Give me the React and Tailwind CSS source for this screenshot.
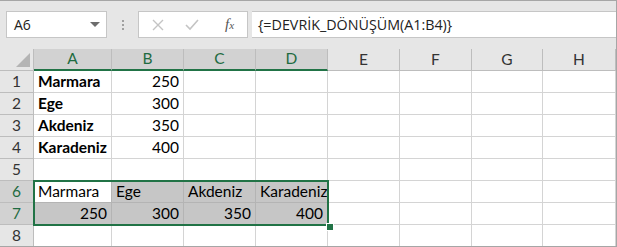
import React from 'react';

const cols = ['A', 'B', 'C', 'D', 'E', 'F', 'G', 'H'];
const widths = ['w-[78px]', 'w-[72px]', 'w-[72px]', 'w-[72px]', 'w-[72px]', 'w-[72px]', 'w-[71px]', 'flex-1'];

const rows = [
  { n: 1, cells: [{ t: 'Marmara', b: true }, { t: '250', r: true }] },
  { n: 2, cells: [{ t: 'Ege', b: true }, { t: '300', r: true }] },
  { n: 3, cells: [{ t: 'Akdeniz', b: true }, { t: '350', r: true }] },
  { n: 4, cells: [{ t: 'Karadeniz', b: true }, { t: '400', r: true }] },
  { n: 5, cells: [] },
  { n: 6, sel: true, cells: [{ t: 'Marmara' }, { t: 'Ege' }, { t: 'Akdeniz' }, { t: 'Karadeniz' }] },
  { n: 7, sel: true, cells: [{ t: '250', r: true }, { t: '300', r: true }, { t: '350', r: true }, { t: '400', r: true }] },
  { n: 8, cells: [] },
];

function Cell({ width, cell, shaded, inSel }) {
  return (
    <div
      className={`${width} h-full shrink-0 border-r border-b flex items-center px-[4px] text-[15.5px] text-black ${
        inSel ? 'border-[#b4b4b4]' : 'border-[#d4d4d4]'
      } ${cell && cell.r ? 'justify-end' : 'justify-start'} ${cell && cell.b ? 'font-bold' : ''} ${
        shaded ? 'bg-[#c6c6c6]' : 'bg-white'
      }`}
    >
      {cell ? cell.t : ''}
    </div>
  );
}

export default function App() {
  return (
    <div className="w-[617px] h-[247px] bg-white border-t border-r border-b border-[#a6a6a6] overflow-hidden font-['Lato',sans-serif] flex flex-col">
      {/* formula bar */}
      <div className="h-[48px] bg-[#e6e6e6] flex items-start pt-[10px] pl-[6px] shrink-0">
        <div className="w-[101px] h-[27px] bg-white border border-[#c6c6c6] flex items-center justify-between pl-[7px] pr-[6px]">
          <span className="text-[#222] font-['Open_Sans',sans-serif] text-[14px]">A6</span>
          <svg width="10" height="6" viewBox="0 0 10 6"><path d="M0 0h10L5 5z" fill="#6d6d6d" /></svg>
        </div>
        <div className="w-[31px] h-[27px] flex flex-col items-center justify-center gap-[2px]">
          <span className="w-[2px] h-[2px] bg-[#a0a0a0]" />
          <span className="w-[2px] h-[2px] bg-[#a0a0a0]" />
          <span className="w-[2px] h-[2px] bg-[#a0a0a0]" />
        </div>
        <div className="w-[110px] h-[27px] bg-white border border-[#c6c6c6] flex items-center">
          <svg className="ml-[13px]" width="12" height="12" viewBox="0 0 12 12"><path d="M1 1l10 10M11 1L1 11" stroke="#c4c4c4" strokeWidth="1.4" /></svg>
          <svg className="ml-[21px]" width="14" height="12" viewBox="0 0 14 12"><path d="M1 6l4 4L13 1" stroke="#c4c4c4" strokeWidth="1.6" fill="none" /></svg>
          <span className="ml-[26px] font-['Liberation_Serif',serif] italic text-[#555] text-[15px] leading-none">
            f<span className="text-[11px]">x</span>
          </span>
        </div>
        <div className="ml-[4px] flex-1 h-[27px] bg-white border-t border-b border-[#c6c6c6] flex items-center pl-[6px] font-['Open_Sans',sans-serif] text-[14.3px] text-[#222]">
          {'{=DEVRİK_DÖNÜŞÜM(A1:B4)}'}
        </div>
      </div>

      {/* column headers */}
      <div className="h-[22px] flex shrink-0 bg-[#e6e6e6]">
        <div className="w-[34px] h-full border-r border-[#bdbdbd] border-b border-b-[#bdbdbd] flex items-end justify-end pr-[3px] pb-[3px]">
          <svg width="14" height="14" viewBox="0 0 14 14"><path d="M14 0v14H0z" fill="#b4b4b4" /></svg>
        </div>
        {cols.map((c, i) => {
          const sel = i < 4;
          return (
            <div
              key={c}
              className={`${widths[i]} h-full shrink-0 border-r border-[#bdbdbd] flex items-center justify-center text-[15.5px] ${
                sel ? 'bg-[#d2d2d2] text-[#1e6b41] border-b-2 border-b-[#217346]' : 'text-[#333] border-b border-b-[#bdbdbd]'
              }`}
            >
              {c}
            </div>
          );
        })}
      </div>

      {/* grid */}
      <div className="relative flex-1 flex flex-col">
        {rows.map((row) => (
          <div key={row.n} className="h-[22px] flex shrink-0">
            <div
              className={`w-[34px] h-full shrink-0 border-r border-b border-[#bdbdbd] flex items-center justify-center text-[15.5px] ${
                row.sel ? 'bg-[#d2d2d2] text-[#1e6b41]' : 'bg-[#e6e6e6] text-[#333]'
              }`}
            >
              {row.n}
            </div>
            {cols.map((c, i) => (
              <Cell
                key={c}
                width={widths[i]}
                cell={row.cells[i]}
                inSel={row.sel && i < 4}
                shaded={row.sel && i < 4 && !(row.n === 6 && i === 0)}
              />
            ))}
          </div>
        ))}
        {/* selection outline */}
        <div className="absolute left-[33px] top-[109px] w-[296px] h-[46px] border-2 border-[#217346] pointer-events-none" />
        <div className="absolute left-[326px] top-[152px] w-[6px] h-[6px] bg-[#217346] border border-white box-content" />
      </div>
    </div>
  );
}
